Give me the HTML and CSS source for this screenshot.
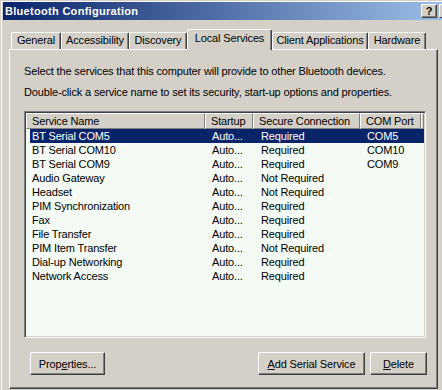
FILE: index.html
```html
<!DOCTYPE html>
<html>
<head>
<meta charset="utf-8">
<link rel="stylesheet" href="styles.css">
</head>
<body>
<div class="window">
  <div class="titlebar">
    <span class="title">Bluetooth Configuration</span>
    <div class="caption-btns">
      <span class="cbtn help">?</span>
      <span class="cbtn close"></span>
    </div>
  </div>
  <div class="client">
    <div class="tabs">
      <div class="tab t-general">General</div>
      <div class="tab t-access">Accessibility</div>
      <div class="tab t-disc">Discovery</div>
      <div class="tab t-local active">Local Services</div>
      <div class="tab t-client">Client Applications</div>
      <div class="tab t-hw">Hardware</div>
    </div>
    <div class="panel">
      <p class="intro">Select the services that this computer will provide to other Bluetooth devices.</p>
      <p class="intro second">Double-click a service name to set its security, start-up options and properties.</p>
      <div class="list">
        <div class="lhead">
          <div class="hcell h1">Service Name</div>
          <div class="hcell h2">Startup</div>
          <div class="hcell h3">Secure Connection</div>
          <div class="hcell h4">COM Port</div>
          <div class="hcell hfill"></div>
        </div>
        <div class="rows">
          <div class="row selected"><span class="c1">BT Serial COM5</span><span class="c2">Auto...</span><span class="c3">Required</span><span class="c4">COM5</span></div>
          <div class="row"><span class="c1">BT Serial COM10</span><span class="c2">Auto...</span><span class="c3">Required</span><span class="c4">COM10</span></div>
          <div class="row"><span class="c1">BT Serial COM9</span><span class="c2">Auto...</span><span class="c3">Required</span><span class="c4">COM9</span></div>
          <div class="row"><span class="c1">Audio Gateway</span><span class="c2">Auto...</span><span class="c3">Not Required</span><span class="c4"></span></div>
          <div class="row"><span class="c1">Headset</span><span class="c2">Auto...</span><span class="c3">Not Required</span><span class="c4"></span></div>
          <div class="row"><span class="c1">PIM Synchronization</span><span class="c2">Auto...</span><span class="c3">Required</span><span class="c4"></span></div>
          <div class="row"><span class="c1">Fax</span><span class="c2">Auto...</span><span class="c3">Required</span><span class="c4"></span></div>
          <div class="row"><span class="c1">File Transfer</span><span class="c2">Auto...</span><span class="c3">Required</span><span class="c4"></span></div>
          <div class="row"><span class="c1">PIM Item Transfer</span><span class="c2">Auto...</span><span class="c3">Not Required</span><span class="c4"></span></div>
          <div class="row"><span class="c1">Dial-up Networking</span><span class="c2">Auto...</span><span class="c3">Required</span><span class="c4"></span></div>
          <div class="row"><span class="c1">Network Access</span><span class="c2">Auto...</span><span class="c3">Required</span><span class="c4"></span></div>
        </div>
      </div>
      <div class="buttons">
        <button class="btn b-props">Prop<u>e</u>rties...</button>
        <div class="btn-group">
          <button class="btn b-add"><u>A</u>dd Serial Service</button>
          <button class="btn b-del"><u>D</u>elete</button>
        </div>
      </div>
    </div>
  </div>
</div>
</body>
</html>
```
FILE: styles.css
```css
html, body {
  margin: 0;
  padding: 0;
}
body {
  width: 442px;
  height: 390px;
  overflow: hidden;
  background: #d4d0c8;
  font-family: "Liberation Sans", Arial, sans-serif;
  font-size: 11px;
  letter-spacing: -0.15px;
  color: #000;
}
.window {
  width: 442px;
  height: 390px;
  overflow: hidden;
  box-sizing: border-box;
  border-top: 1px solid #d4d0c8;
  border-left: 1px solid #d4d0c8;
  box-shadow: inset 1px 1px 0 #ffffff;
  padding: 1px 0 0 2px;
}
.titlebar {
  width: 439px;
  height: 18px;
  display: flex;
  align-items: center;
  background: linear-gradient(to right, #0a246a, #a6caf0 108%);
  padding-left: 2px;
  box-sizing: border-box;
}
.title {
  color: #fff;
  font-weight: bold;
  font-size: 11px;
  letter-spacing: 0.3px;
  white-space: nowrap;
}
.caption-btns {
  margin-left: auto;
  display: flex;
  gap: 2px;
}
.cbtn {
  width: 16px;
  height: 14px;
  box-sizing: border-box;
  background: #d4d0c8;
  border-top: 1px solid #fff;
  border-left: 1px solid #fff;
  border-right: 1px solid #404040;
  border-bottom: 1px solid #404040;
  box-shadow: inset -1px -1px 0 #808080;
  font-weight: bold;
  font-size: 11px;
  line-height: 12px;
  letter-spacing: 0;
  text-align: center;
  color: #000;
}
.cbtn.close {
  width: 3px;
  border-right: 0;
  box-shadow: none;
}
.client {
  padding: 9px 0 0 6px;
}
.tabs {
  display: flex;
  align-items: flex-end;
  height: 20px;
  padding-left: 2px;
  position: relative;
  z-index: 1;
}
.tab {
  height: 17px;
  box-sizing: border-box;
  border-top: 1px solid #fff;
  border-left: 1px solid #fff;
  border-right: 1px solid #404040;
  box-shadow: inset -1px 0 0 #808080;
  border-radius: 2px 2px 0 0;
  text-align: center;
  line-height: 15px;
  white-space: nowrap;
  background: #d4d0c8;
}
.tab.active {
  height: 21px;
  margin-bottom: -1px;
  line-height: 17px;
}
.t-general { width: 50px; }
.t-access { width: 68px; }
.t-disc { width: 58px; }
.t-local { width: 85px; }
.t-client { width: 96px; }
.t-hw { width: 58px; }

.panel {
  width: 429px;
  height: 340px;
  box-sizing: border-box;
  border-top: 1px solid #fff;
  border-left: 1px solid #fff;
  border-right: 1px solid #404040;
  border-bottom: 1px solid #404040;
  box-shadow: inset -1px -1px 0 #808080;
  padding: 15px 0 0 14px;
}
.intro {
  margin: 0;
  line-height: 13px;
  white-space: nowrap;
}
.intro.second {
  margin-top: 8px;
}
.list {
  margin-top: 12px;
  width: 402px;
  height: 227px;
  box-sizing: border-box;
  border-top: 1px solid #808080;
  border-left: 1px solid #808080;
  border-right: 1px solid #fff;
  border-bottom: 1px solid #fff;
  box-shadow: inset 1px 1px 0 #404040, inset -1px -1px 0 #d4d0c8;
  padding: 1px;
  background: #f4faf4;
}
.lhead {
  display: flex;
  height: 16px;
  background: #d4d0c8;
}
.hcell {
  box-sizing: border-box;
  height: 16px;
  border-top: 1px solid #fff;
  border-left: 1px solid #fff;
  border-right: 1px solid #808080;
  border-bottom: 1px solid #808080;
  padding-left: 5px;
  line-height: 14px;
  white-space: nowrap;
  overflow: hidden;
}
.h1 { width: 179px; }
.h2 { width: 48px; }
.h3 { width: 107px; }
.h4 { width: 61px; }
.hfill { flex: 1; padding: 0; }

.rows {
  padding-left: 4px;
}
.row {
  display: grid;
  grid-template-columns: 175px 48px 107px 61px;
  height: 14px;
  line-height: 14px;
  white-space: nowrap;
}
.row.selected {
  background: #0a246a;
  color: #fff;
}
.row span {
  padding-left: 7px;
  overflow: hidden;
}
.row .c1 { padding-left: 2px; }
.row .c3 { padding-left: 8px; }

.buttons {
  margin-top: 14px;
  margin-left: 6px;
  width: 397px;
  display: flex;
  justify-content: space-between;
}
.btn-group {
  display: flex;
  gap: 5px;
}
.btn {
  height: 23px;
  box-sizing: border-box;
  background: #d4d0c8;
  font-family: inherit;
  font-size: 11px;
  letter-spacing: -0.15px;
  color: #000;
  padding: 0;
  margin: 0;
  border-top: 1px solid #fff;
  border-left: 1px solid #fff;
  border-right: 1px solid #404040;
  border-bottom: 1px solid #404040;
  box-shadow: inset -1px -1px 0 #808080;
  border-radius: 0;
}
.b-props { width: 75px; }
.b-add { width: 107px; }
.b-del { width: 57px; }
```
